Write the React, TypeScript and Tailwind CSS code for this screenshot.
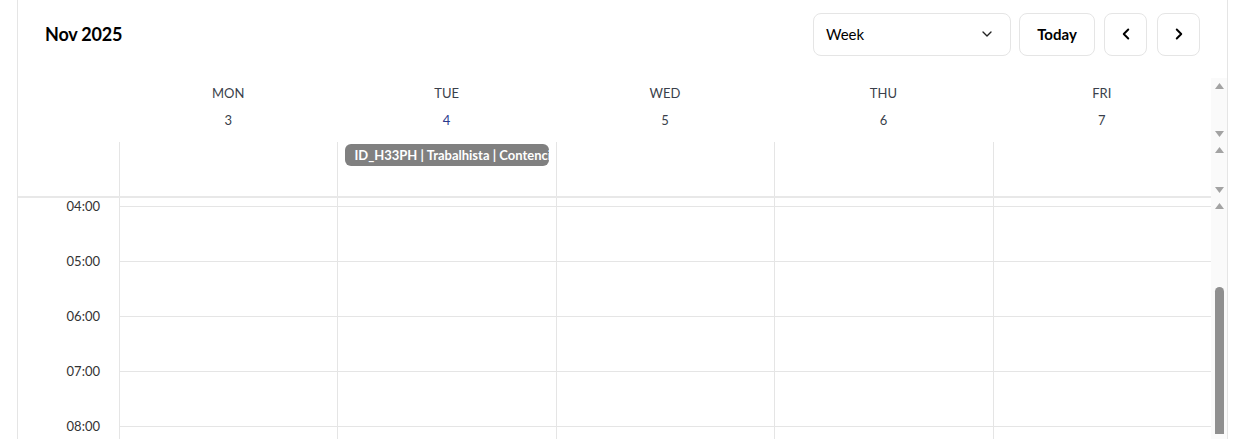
import { ChevronDown, ChevronLeft, ChevronRight } from "lucide-react";

const days = [
  { name: "MON", date: 3 },
  { name: "TUE", date: 4, today: true },
  { name: "WED", date: 5 },
  { name: "THU", date: 6 },
  { name: "FRI", date: 7 },
];

const hours = ["04:00", "05:00", "06:00", "07:00", "08:00"];

function Arrow({ dir }: { dir: "up" | "down" }) {
  return (
    <svg width="9" height="6" viewBox="0 0 9 6" className="fill-[#a3a3a3] shrink-0">
      {dir === "up" ? <polygon points="4.5,0 9,6 0,6" /> : <polygon points="0,0 9,0 4.5,6" />}
    </svg>
  );
}

function ScrollTrack({ thumb = false }: { thumb?: boolean }) {
  return (
    <div className="w-[16px] shrink-0 bg-[#fafafa] flex flex-col items-center py-[5px]">
      <Arrow dir="up" />
      {thumb ? (
        <div className="mt-[78px] w-[9px] flex-1 rounded-t-full bg-[#8f8f8f]" />
      ) : (
        <>
          <div className="flex-1" />
          <Arrow dir="down" />
        </>
      )}
    </div>
  );
}

export default function App() {
  return (
    <div
      className="h-[439px] overflow-hidden bg-white text-[#333]"
      style={{ fontFamily: "Lato, 'Liberation Sans', sans-serif" }}
    >
      <div className="ml-[17px] w-[1211px] h-full border-x border-[#e5e5e5] flex flex-col">
        {/* toolbar */}
        <div className="shrink-0 flex items-center h-[78px] pl-[27px] pr-[27px] pb-[10px]">
          <h1 className="text-[18px] font-bold text-black tracking-[-0.2px]">Nov 2025</h1>
          <div className="ml-auto flex items-center">
            <div className="w-[198px] h-[43px] rounded-lg border border-[#e5e5e5] flex items-center justify-between pl-[12px] pr-[15px]">
              <span className="text-[15px] text-black">Week</span>
              <ChevronDown size={16} strokeWidth={2} className="text-[#222]" />
            </div>
            <button className="ml-[8px] w-[76px] h-[43px] rounded-lg border border-[#e5e5e5] text-[15px] font-bold text-black">
              Today
            </button>
            <button className="ml-[9px] w-[43px] h-[43px] rounded-lg border border-[#e5e5e5] flex items-center justify-center">
              <ChevronLeft size={18} strokeWidth={2.6} className="text-black" />
            </button>
            <button className="ml-[10px] w-[43px] h-[43px] rounded-lg border border-[#e5e5e5] flex items-center justify-center">
              <ChevronRight size={18} strokeWidth={2.6} className="text-black" />
            </button>
          </div>
        </div>

        {/* day header */}
        <div className="shrink-0 flex h-[64px]">
          <div className="w-[101px] shrink-0" />
          {days.map((d) => (
            <div key={d.name} className="flex-1 basis-0 min-w-0 flex flex-col items-center pt-[7px] text-[13px]">
              <span className="leading-[16px] text-[#3a3f4b]">{d.name}</span>
              <span className={`mt-[11px] leading-[16px] ${d.today ? "text-[#2b3a8c]" : "text-[#3a3f4b]"}`}>
                {d.date}
              </span>
            </div>
          ))}
          <ScrollTrack />
        </div>

        {/* all-day row */}
        <div className="shrink-0 flex h-[56px]">
          <div className="flex flex-1 min-w-0 border-b-2 border-[#e8e8e8]">
            <div className="w-[102px] shrink-0 border-r border-[#e5e5e5]" />
            {days.map((d, i) => (
              <div
                key={d.name}
                className={`flex-1 basis-0 min-w-0 px-[7px] pt-[2px] ${i > 0 ? "border-l border-[#e5e5e5]" : ""}`}
              >
                {d.name === "TUE" && (
                  <div className="h-[22px] rounded-md bg-[#808080] text-white text-[13px] font-bold leading-[22px] pl-[9px] whitespace-nowrap overflow-hidden">
                    ID_H33PH | Trabalhista | Contencioso | Audiência
                  </div>
                )}
              </div>
            ))}
          </div>
          <ScrollTrack />
        </div>

        {/* time grid */}
        <div className="flex flex-1 min-h-0 overflow-hidden">
          <div className="w-[102px] shrink-0 border-r border-[#e5e5e5] text-[13px]">
            {hours.map((h) => (
              <div key={h} className="h-[55px] flex justify-end pr-[19px] leading-[16px]">
                {h}
              </div>
            ))}
          </div>
          {days.map((d, i) => (
            <div key={d.name} className={`flex-1 basis-0 min-w-0 pt-[8px] ${i > 0 ? "border-l border-[#e5e5e5]" : ""}`}>
              {hours.map((h) => (
                <div key={h} className="h-[55px] border-t border-[#e5e5e5]" />
              ))}
            </div>
          ))}
          <ScrollTrack thumb />
        </div>
      </div>
    </div>
  );
}
